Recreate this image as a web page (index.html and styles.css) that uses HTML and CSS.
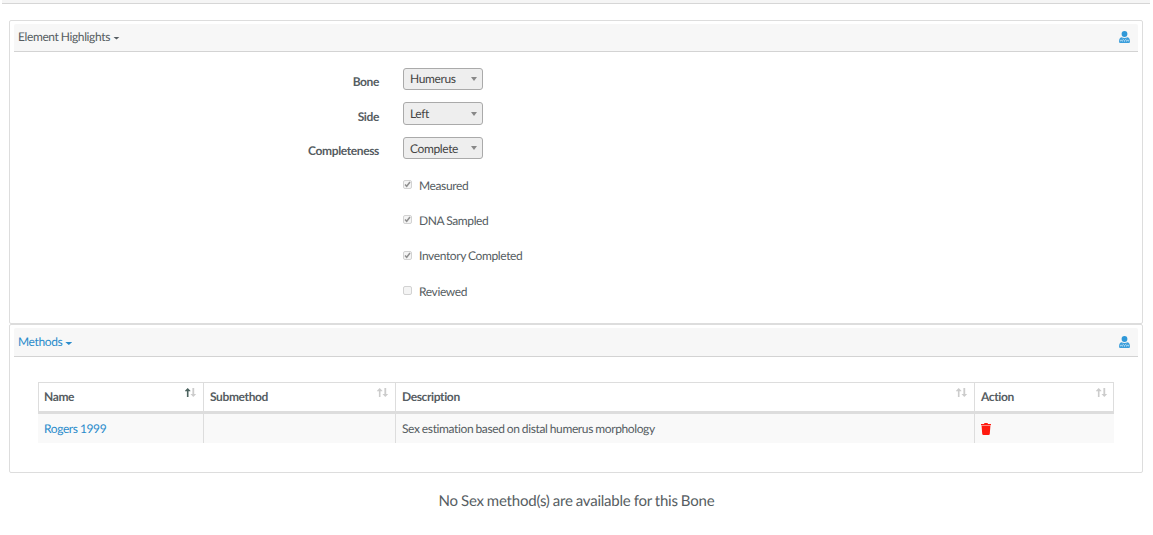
FILE: index.html
```html
<!DOCTYPE html>
<html lang="en">
<head>
<meta charset="utf-8">
<title>Element Highlights</title>
<link rel="stylesheet" href="styles.css">
</head>
<body>
<svg class="defs" aria-hidden="true">
  <symbol id="user" viewBox="0 0 11 12">
    <circle cx="5.5" cy="3" r="2.9" fill="#2f98d8"/>
    <path d="M2.4 6.2 Q5.5 7.8 8.6 6.2 Q11 7 11 10.5 Q11 12 9.8 12 H1.2 Q0 12 0 10.5 Q0 7 2.4 6.2Z" fill="#3b9edb"/>
    <path d="M1.3 10.4 V9.3 H3.4 V10.6 M3.7 8 L5.5 9.6 L7.3 8 M5.5 9.6 V10.7 M7.6 10.6 V9.3 H9.7 V10.4" fill="none" stroke="#c5e3f5" stroke-width=".8"/>
  </symbol>
  <symbol id="sort" viewBox="0 0 12 10">
    <path class="up" d="M2.7 0 L5.4 2.8 V3.2 H3.5 V9 H1.9 V3.2 H0 V2.8Z"/>
    <path class="down" d="M7.4 0 H9.2 V6 H11.2 L8.3 9 L5.5 6 H7.4Z"/>
  </symbol>
</svg>
<div class="topbar"></div>
<section class="panel highlights">
  <header class="panel-head"><a class="title">Element Highlights<i class="caret"></i></a><svg class="user"><use href="#user"/></svg></header>
  <div class="form">
    <div class="field"><label>Bone</label><div class="select"><span>Humerus</span><i class="arrow"></i></div></div>
    <div class="field"><label>Side</label><div class="select"><span>Left</span><i class="arrow"></i></div></div>
    <div class="field"><label>Completeness</label><div class="select"><span>Complete</span><i class="arrow"></i></div></div>
    <div class="checks">
      <div class="check"><span class="box"><svg viewBox="0 0 9 9"><path d="M2 4.5 L3.7 6.3 L7 2"/></svg></span>Measured</div>
      <div class="check"><span class="box"><svg viewBox="0 0 9 9"><path d="M2 4.5 L3.7 6.3 L7 2"/></svg></span>DNA Sampled</div>
      <div class="check"><span class="box"><svg viewBox="0 0 9 9"><path d="M2 4.5 L3.7 6.3 L7 2"/></svg></span>Inventory Completed</div>
      <div class="check"><span class="box"></span>Reviewed</div>
    </div>
  </div>
</section>
<section class="panel methods">
  <header class="panel-head"><a class="title link">Methods<i class="caret"></i></a><svg class="user"><use href="#user"/></svg></header>
  <div class="grid">
    <div class="row head">
      <div class="cell">Name<svg class="sort asc"><use href="#sort"/></svg></div>
      <div class="cell">Submethod<svg class="sort"><use href="#sort"/></svg></div>
      <div class="cell">Description<svg class="sort"><use href="#sort"/></svg></div>
      <div class="cell">Action<svg class="sort"><use href="#sort"/></svg></div>
    </div>
    <div class="row data">
      <div class="cell"><a class="link">Rogers 1999</a></div>
      <div class="cell"></div>
      <div class="cell">Sex estimation based on distal humerus morphology</div>
      <div class="cell"><svg class="trash" viewBox="0 0 10 12"><path d="M0 1 H3 L3.5 0 H6.5 L7 1 H10 V2.2 H0Z M.6 2.7 H9.4 L8.8 10.8 Q8.7 12 7.5 12 H2.5 Q1.3 12 1.2 10.8Z"/></svg></div>
    </div>
  </div>
</section>
<p class="notice">No Sex method(s) are available for this Bone</p>
</body>
</html>
```
FILE: styles.css
```css
* { box-sizing: border-box; }
body {
  margin: 0;
  height: 535px;
  overflow: hidden;
  background: #fff;
  color: #565d62;
  font: 12px/18px Lato, sans-serif;
  letter-spacing: -.38px;
  word-spacing: -.4px;
  text-rendering: geometricPrecision;
}
.defs { display: none; }
.topbar {
  height: 4px;
  margin: 0 3px 16px 2px;
  background: #f5f5f5;
  border-bottom: 1px solid #d6d6d6;
}
.panel {
  width: 1134px;
  margin-left: 9px;
  padding: 3px 4px 0;
  border: 1px solid #ddd;
  border-radius: 2px;
}
.highlights { height: 304px; }
.methods { height: 149px; }
.panel-head {
  display: flex;
  justify-content: space-between;
  align-items: center;
  height: 28px;
  padding: 0 8px 2px 4px;
  background: #f7f7f7;
  border-bottom: 1px solid #d3d3d3;
  border-radius: 2px 2px 0 0;
}
.methods .panel-head { height: 29px; padding-bottom: 0; }
.title { display: flex; align-items: center; }
.link { color: #2a8bcb; }
.caret {
  width: 7px;
  height: 3px;
  margin: 3px 0 0 3px;
  background: currentColor;
  clip-path: polygon(0 0, 100% 0, 50% 100%);
}
.user { width: 11px; height: 12px; }
.form { padding-top: 16px; }
.field { display: flex; height: 35px; }
.field:nth-child(2) { height: 34px; }
.field label {
  width: 365px;
  padding-top: 5px;
  text-align: right;
  font-weight: 700;
}
.select {
  display: flex;
  align-items: center;
  justify-content: space-between;
  width: 80px;
  height: 22px;
  margin-left: 24px;
  padding: 0 5px 0 6px;
  background: #eee;
  border: 1px solid #aaa;
  border-radius: 3px;
  color: #444;
}
.field:nth-child(2) .select { height: 23px; margin-top: -1px; padding-top: 1px; }
.field:nth-child(3) .select { padding-top: 2px; }
.field:nth-child(3) .arrow { margin-top: -2px; }
.arrow {
  border: 3px solid transparent;
  border-top: 4px solid #888;
  border-bottom: 0;
}
.checks { padding: 5px 0 0 389px; }
.check { display: flex; align-items: center; height: 18px; margin-bottom: 17px; }
.check:nth-child(3) { margin-bottom: 18px; }
.box {
  width: 9px;
  height: 9px;
  margin: -3px 7px 0 0;
  border: 1px solid #d2d2d2;
  border-radius: 2px;
  background: #f4f4f4;
}
.check:nth-child(3) .box { margin-top: -1px; }
.box svg { display: block; width: 9px; height: 9px; margin: -1px; }
.box path { fill: none; stroke: #909090; stroke-width: 1.5; }
.grid { width: 1076px; margin: 25px 0 0 24px; }
.row { display: grid; grid-template-columns: 165px 192px 579px 140px; }
.head {
  height: 32px;
  border: solid #ddd;
  border-width: 1px 0 3px;
  font-weight: 700;
}
.data { height: 29px; background: #f9f9f9; }
.cell {
  display: flex;
  align-items: center;
  justify-content: space-between;
  padding: 1px 6px 0 6px;
  border-left: 1px solid #ddd;
}
.cell:first-child { padding-left: 5px; }
.head .cell { padding-top: 0; }
.head .cell:last-child { border-right: 1px solid #ddd; padding-right: 5px; }
.data .cell:first-child { border-left-color: transparent; }
.sort { width: 12px; height: 10px; margin-top: -8px; fill: #ccc; --up: #ccc; }
.up { fill: var(--up); }
.asc { --up: #4b625e; }
.trash { width: 10px; height: 12px; fill: #ff1a0f; }
.notice {
  margin: 17px 0 0;
  text-align: center;
  font-size: 15px;
  line-height: 22px;
  letter-spacing: -.22px;
  word-spacing: -.5px;
}
```
